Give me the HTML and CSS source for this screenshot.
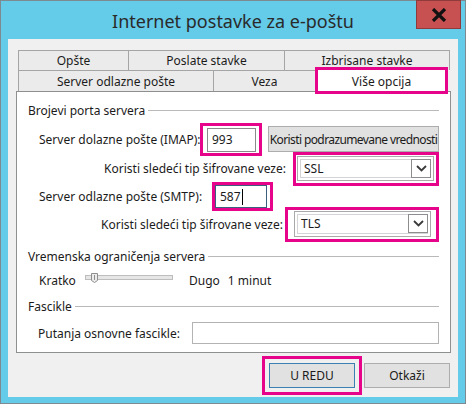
FILE: index.html
```html
<!DOCTYPE html>
<html lang="sr">
<head>
<meta charset="UTF-8">
<title>Internet postavke za e-poštu</title>
<link rel="stylesheet" href="styles.css">
</head>
<body>
<div class="window">
    <div class="titlebar">
        <span></span>
        <h1 class="title">Internet postavke za e-poštu</h1>
        <button class="close" aria-label="Zatvori">
            <svg width="16" height="14" viewBox="0 0 16 14"><path d="M2 1 L14 13 M14 1 L2 13" stroke="#111" stroke-width="3.2" fill="none"/></svg>
        </button>
    </div>

    <div class="client">
        <div class="tabs">
            <div class="tab-row top">
                <div class="tab w-opste">Opšte</div>
                <div class="tab w-poslate">Poslate stavke</div>
                <div class="tab w-izbrisane">Izbrisane stavke</div>
            </div>
            <div class="tab-row">
                <div class="tab w-server">Server odlazne pošte</div>
                <div class="tab w-veza">Veza</div>
                <div class="tab active">Više opcija</div>
            </div>
        </div>

        <div class="panel">
            <div class="legend"><span>Brojevi porta servera</span><i class="rule"></i></div>

            <div class="row row-imap">
                <span class="lbl lbl-imap">Server dolazne pošte (IMAP):</span>
                <span class="mark mark-imap"><span class="field port">993</span></span>
                <button class="btn btn-default">Koristi podrazumevane vrednosti</button>
            </div>

            <div class="row row-ssl">
                <span class="lbl-r">Koristi sledeći tip šifrovane veze:</span>
                <span class="mark mark-ssl">
                    <span class="combo">SSL<i class="drop"><svg width="11" height="7" viewBox="0 0 11 7"><path d="M1 1 L5.5 5.5 L10 1" stroke="#3a3a3a" stroke-width="1.8" fill="none"/></svg></i></span>
                </span>
            </div>

            <div class="row row-smtp">
                <span class="lbl lbl-smtp">Server odlazne pošte (SMTP):</span>
                <span class="mark mark-smtp"><span class="field port focused">587<i class="caret"></i></span></span>
            </div>

            <div class="row row-tls">
                <span class="lbl-r">Koristi sledeći tip šifrovane veze:</span>
                <span class="mark mark-tls">
                    <span class="combo">TLS<i class="drop"><svg width="11" height="7" viewBox="0 0 11 7"><path d="M1 1 L5.5 5.5 L10 1" stroke="#3a3a3a" stroke-width="1.8" fill="none"/></svg></i></span>
                </span>
            </div>

            <div class="legend legend-time"><span>Vremenska ograničenja servera</span><i class="rule"></i></div>

            <div class="row row-slider">
                <span class="lbl lbl-kratko">Kratko</span>
                <svg class="slider" width="88" height="16" viewBox="0 0 88 16">
                    <rect x="0.5" y="3.5" width="87" height="4" fill="#e6e6e6" stroke="#bdbdbd"/>
                    <path d="M6.5 1.5 H12.5 V8.5 L9.5 10.5 L6.5 8.5 Z" fill="#ececec" stroke="#8f8f8f"/>
                    <path d="M9.5 3 V8" stroke="#8f8f8f"/>
                </svg>
                <span class="dugo">Dugo</span>
                <span class="minut">1 minut</span>
            </div>

            <div class="legend legend-folder"><span>Fascikle</span><i class="rule"></i></div>

            <div class="row row-path">
                <span class="lbl lbl-path">Putanja osnovne fascikle:</span>
                <span class="field path"></span>
            </div>
        </div>

        <div class="actions">
            <span class="mark mark-ok"><button class="btn btn-ok">U REDU</button></span>
            <button class="btn btn-cancel">Otkaži</button>
        </div>
    </div>
</div>
</body>
</html>
```

FILE: styles.css
```css
* {
    box-sizing: border-box;
}

body {
    margin: 0;
    font-family: "Noto Sans", "Open Sans", sans-serif;
    font-size: 12px;
    color: #1b1b1b;
}

.window {
    width: 466px;
    height: 404px;
    background-color: #64cbe9;
    border: 1px solid #7d8a8f;
    padding: 0 7px 6px 7px;
}

/* title bar */
.titlebar {
    height: 38px;
    display: grid;
    grid-template-columns: 1fr auto 1fr;
    align-items: start;
}

.title {
    margin: 6px 0 0 0;
    font-size: 18px;
    font-weight: normal;
    line-height: 28px;
    color: #2a2a2a;
    white-space: nowrap;
}

.close {
    justify-self: end;
    width: 45px;
    height: 29px;
    margin: -1px -3px 0 0;
    padding: 0;
    background-color: #c75050;
    border: 1px solid #8f3b3b;
    display: flex;
    align-items: center;
    justify-content: center;
}

/* dialog body */
.client {
    width: 450px;
    height: 358px;
    background-color: #f0f0f0;
    padding-top: 11px;
}

.tabs {
    margin-left: 10px;
}

.tab-row {
    display: flex;
    height: 21px;
}

.tab-row.top {
    height: 20px;
}

.tab {
    height: 100%;
    margin-left: -1px;
    background-color: #ebebeb;
    border: 1px solid #a5a5a5;
    border-bottom: 0;
    display: flex;
    align-items: center;
    justify-content: center;
    white-space: nowrap;
}

.tab:first-child {
    margin-left: 0;
}

.tab-row.top .tab {
    padding-bottom: 1px;
}

.w-opste { width: 111px; }
.w-poslate { width: 157px; }
.w-izbrisane { width: 166px; }
.w-server { width: 196px; }
.w-veza { width: 103px; }

.tab.active {
    position: relative;
    z-index: 1;
    width: 133px;
    height: 27px;
    margin-top: -3px;
    background-color: #fff;
    border: 3px solid #e6058a;
    padding-top: 1px;
}

.panel {
    width: 435px;
    height: 262px;
    margin-left: 8px;
    background-color: #fff;
    border: 1px solid #8e8f8f;
    padding: 0 11px;
}

.legend {
    display: flex;
    align-items: center;
    gap: 3px;
    height: 16px;
    margin-top: 10px;
    white-space: nowrap;
}

.legend .rule {
    flex: 1;
    border-top: 1px solid #b9b9b9;
}

.legend-time {
    margin-top: 11px;
}

.row {
    display: flex;
    align-items: center;
    white-space: nowrap;
}

.lbl {
    padding-left: 11px;
}

.lbl-r {
    width: 263px;
    text-align: right;
}

.mark {
    display: flex;
    border: 3px solid #e6058a;
}

.field {
    display: flex;
    align-items: center;
    background-color: #fff;
    border: 1px solid #8a8a8a;
    padding-left: 4px;
}

/* port numbers */
.row-imap {
    margin-top: 8px;
    height: 26px;
}

.lbl-imap {
    width: 172px;
}

.mark-imap {
    padding: 2px 3px 1px 4px;
}

.port {
    width: 49px;
    height: 24px;
}

.btn {
    font-family: inherit;
    font-size: 12px;
    color: #1b1b1b;
    background-color: #e1e1e1;
    border: 1px solid #adadad;
    padding: 0;
}

.btn-default {
    width: 171px;
    height: 26px;
    margin-left: 6px;
    letter-spacing: -0.6px;
    white-space: nowrap;
}

.row-ssl {
    margin-top: 4px;
    height: 25px;
}

.mark-ssl {
    margin-left: 7px;
    padding: 1px 2px 2px 1px;
}

.combo {
    width: 137px;
    height: 25px;
    display: flex;
    align-items: center;
    padding-left: 6px;
    background-color: #fff;
    border: 1px solid #a9a9a9;
    box-shadow: inset 0 0 0 2px #fff, inset 0 0 0 3px #d4d4d4;
}

.drop {
    margin-left: auto;
    margin-right: 2px;
    width: 20px;
    height: 19px;
    border: 1px solid #8d8d8d;
    background-color: #fff;
    display: flex;
    align-items: center;
    justify-content: center;
}

.row-smtp {
    margin-top: 4px;
    height: 23px;
}

.lbl-smtp {
    width: 184px;
}

.mark-smtp {
    padding: 0 3px 0 0;
}

.port.focused {
    width: 52px;
    height: 23px;
    border-color: #3d5f7e;
}

.caret {
    display: inline-block;
    width: 1px;
    height: 16px;
    margin-left: 1px;
    background-color: #000;
}

.row-tls {
    margin-top: 3px;
    height: 26px;
}

.mark-tls {
    margin-left: 2px;
    padding: 1px 5px 2px 6px;
}

.row-tls .combo {
    height: 26px;
}

/* timeout slider */
.row-slider {
    margin-top: 8px;
    height: 16px;
}

.lbl-kratko {
    width: 57px;
}

.dugo {
    margin-left: 16px;
}

.minut {
    margin-left: 8px;
}

.legend-folder {
    margin-top: 10px;
}

.row-path {
    margin-top: 8px;
    height: 22px;
}

.lbl-path {
    width: 164px;
    padding-left: 10px;
}

.field.path {
    width: 247px;
    height: 22px;
    border-color: #b3b3b3;
}

/* OK / Cancel */
.actions {
    display: flex;
    justify-content: flex-end;
    align-items: center;
    height: 25px;
    margin-top: 10px;
    padding-right: 8px;
}

.mark-ok {
    padding: 4px;
    margin-right: 2px;
}

.btn-ok,
.btn-cancel {
    width: 86px;
    height: 25px;
}

.btn-ok {
    border-color: #3c7fb1;
}
```
